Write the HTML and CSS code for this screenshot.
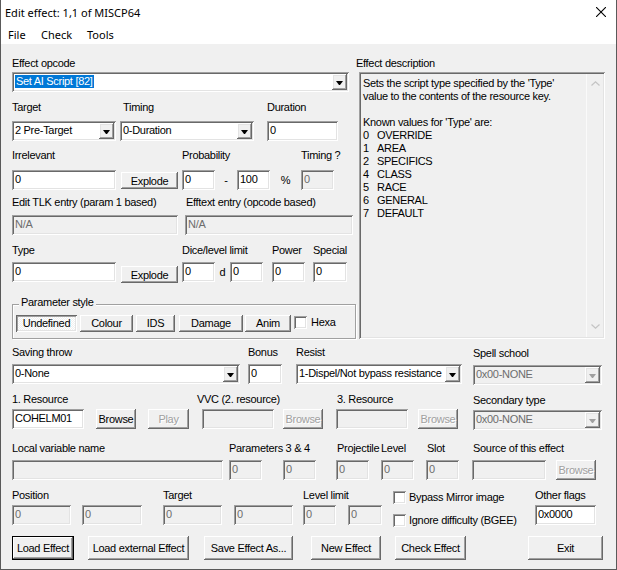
FILE: index.html
```html
<!DOCTYPE html>
<html lang="en">
<head>
    <meta charset="UTF-8">
    <title>Edit effect: 1,1 of MISCP64</title>
    <link rel="stylesheet" href="styles.css">
</head>
<body>
<div class="win">
    <div class="titlebar">
        <span class="title">Edit effect: 1,1 of MISCP64</span>
        <svg class="close" width="10" height="10" viewBox="0 0 10 10"><path d="M0 0L10 10M10 0L0 10" stroke="#000" stroke-width="1.1"/></svg>
    </div>
    <div class="menubar">
        <span class="m-file">File</span><span class="m-check">Check</span><span>Tools</span>
    </div>

    <div class="client">
        <div class="top">
            <div class="lcol">
                <!-- opcode -->
                <div class="row r1">
                    <div class="fld">
                        <div class="lbl">Effect opcode</div>
                        <div class="combo w337"><span class="val"><span class="sel">Set AI Script [82]</span></span><span class="arr"></span></div>
                    </div>
                </div>

                <div class="row r2">
                    <div class="fld">
                        <div class="lbl">Target</div>
                        <div class="combo w104"><span class="val">2 Pre-Target</span><span class="arr"></span></div>
                    </div>
                    <div class="fld ml4">
                        <div class="lbl pl3">Timing</div>
                        <div class="combo w134"><span class="val">0-Duration</span><span class="arr"></span></div>
                    </div>
                    <div class="fld ml13">
                        <div class="lbl">Duration</div>
                        <div class="edit w71">0</div>
                    </div>
                </div>

                <div class="row r3">
                    <div class="fld">
                        <div class="lbl">Irrelevant</div>
                        <div class="edit w104">0</div>
                    </div>
                    <div class="fld ml5">
                        <div class="lbl"></div>
                        <div class="btn small w57">Explode</div>
                    </div>
                    <div class="fld ml4">
                        <div class="lbl">Probability</div>
                        <div class="edit w33">0</div>
                    </div>
                    <div class="fld">
                        <div class="lbl"></div>
                        <div class="txt w22">-</div>
                    </div>
                    <div class="fld">
                        <div class="lbl"></div>
                        <div class="edit w33">100</div>
                    </div>
                    <div class="fld">
                        <div class="lbl"></div>
                        <div class="txt w31">%</div>
                    </div>
                    <div class="fld">
                        <div class="lbl">Timing ?</div>
                        <div class="edit dis w33">0</div>
                    </div>
                </div>

                <div class="row r4">
                    <div class="fld">
                        <div class="lbl">Edit TLK entry (param 1 based)</div>
                        <div class="edit dis w166">N/A</div>
                    </div>
                    <div class="fld ml7">
                        <div class="lbl pl1">Efftext entry (opcode based)</div>
                        <div class="edit dis w168">N/A</div>
                    </div>
                </div>

                <div class="row r5">
                    <div class="fld">
                        <div class="lbl">Type</div>
                        <div class="edit w104">0</div>
                    </div>
                    <div class="fld ml5">
                        <div class="lbl"></div>
                        <div class="btn small low w57">Explode</div>
                    </div>
                    <div class="fld ml4">
                        <div class="lbl">Dice/level limit</div>
                        <div class="edit w33">0</div>
                    </div>
                    <div class="fld">
                        <div class="lbl"></div>
                        <div class="txt w15">d</div>
                    </div>
                    <div class="fld">
                        <div class="lbl"></div>
                        <div class="edit w33">0</div>
                    </div>
                    <div class="fld ml9">
                        <div class="lbl">Power</div>
                        <div class="edit w33">0</div>
                    </div>
                    <div class="fld ml8">
                        <div class="lbl">Special</div>
                        <div class="edit w34">0</div>
                    </div>
                </div>

                <div class="grp">
                    <div class="grp-title">Parameter style</div>
                    <div class="grp-row">
                        <div class="btn tool pressed w61">Undefined</div>
                        <div class="btn tool ml3 w53">Colour</div>
                        <div class="btn tool ml3 w39">IDS</div>
                        <div class="btn tool ml4 w64">Damage</div>
                        <div class="btn tool ml2 w46">Anim</div>
                        <div class="chk ml3"></div>
                        <span class="chk-text">Hexa</span>
                    </div>
                </div>
            </div>

            <div class="rcol">
                <div class="lbl">Effect description</div>
                <div class="desc">
                    <div class="desc-text">
                        <div>Sets the script type specified by the 'Type'</div>
                        <div>value to the contents of the resource key.</div>
                        <div>&nbsp;</div>
                        <div>Known values for 'Type' are:</div>
                        <div><span class="num">0</span>OVERRIDE</div>
                        <div><span class="num">1</span>AREA</div>
                        <div><span class="num">2</span>SPECIFICS</div>
                        <div><span class="num">4</span>CLASS</div>
                        <div><span class="num">5</span>RACE</div>
                        <div><span class="num">6</span>GENERAL</div>
                        <div><span class="num">7</span>DEFAULT</div>
                    </div>
                    <div class="sb">
                        <svg width="9" height="5" viewBox="0 0 9 5"><path d="M0.5 4.5L4.5 0.8L8.5 4.5" fill="none" stroke="#c4c4c4" stroke-width="1.2"/></svg>
                        <svg width="9" height="5" viewBox="0 0 9 5"><path d="M0.5 0.5L4.5 4.2L8.5 0.5" fill="none" stroke="#c4c4c4" stroke-width="1.2"/></svg>
                    </div>
                </div>
            </div>
        </div>

        <div class="row r6">
            <div class="fld">
                <div class="lbl">Saving throw</div>
                <div class="combo w228"><span class="val">0-None</span><span class="arr"></span></div>
            </div>
            <div class="fld ml8">
                <div class="lbl">Bonus</div>
                <div class="edit w34">0</div>
            </div>
            <div class="fld ml14">
                <div class="lbl">Resist</div>
                <div class="combo w166"><span class="val">1-Dispel/Not bypass resistance</span><span class="arr"></span></div>
            </div>
            <div class="fld ml11 dn1">
                <div class="lbl">Spell school</div>
                <div class="combo dis w129"><span class="val">0x00-NONE</span><span class="arr"></span></div>
            </div>
        </div>

        <div class="row r7">
            <div class="fld">
                <div class="lbl">1. Resource</div>
                <div class="edit w72">COHELM01</div>
            </div>
            <div class="fld ml12">
                <div class="lbl"></div>
                <div class="btn w40">Browse</div>
            </div>
            <div class="fld ml12">
                <div class="lbl"></div>
                <div class="btn dis w41">Play</div>
            </div>
            <div class="fld ml13">
                <div class="lbl nl5">VVC (2. resource)</div>
                <div class="edit dis w72"></div>
            </div>
            <div class="fld ml9">
                <div class="lbl"></div>
                <div class="btn dis w40">Browse</div>
            </div>
            <div class="fld ml13">
                <div class="lbl pl1">3. Resource</div>
                <div class="edit dis w72"></div>
            </div>
            <div class="fld ml10">
                <div class="lbl"></div>
                <div class="btn dis w40">Browse</div>
            </div>
            <div class="fld ml15 dn1">
                <div class="lbl">Secondary type</div>
                <div class="combo dis w129"><span class="val">0x00-NONE</span><span class="arr"></span></div>
            </div>
        </div>

        <div class="row r8">
            <div class="fld">
                <div class="lbl">Local variable name</div>
                <div class="edit dis w211"></div>
            </div>
            <div class="fld ml6">
                <div class="lbl">Parameters 3 &amp; 4</div>
                <div class="edit dis w33">0</div>
            </div>
            <div class="fld ml21">
                <div class="lbl"></div>
                <div class="edit dis w33">0</div>
            </div>
            <div class="fld ml20">
                <div class="lbl pl1">Projectile</div>
                <div class="edit dis w33">0</div>
            </div>
            <div class="fld ml12">
                <div class="lbl">Level</div>
                <div class="edit dis w33">0</div>
            </div>
            <div class="fld ml12">
                <div class="lbl pl1">Slot</div>
                <div class="edit dis w33">0</div>
            </div>
            <div class="fld ml13">
                <div class="lbl pl1">Source of this effect</div>
                <div class="edit dis w74"></div>
            </div>
            <div class="fld ml10">
                <div class="lbl"></div>
                <div class="btn dis w40">Browse</div>
            </div>
        </div>

        <div class="row r9">
            <div class="fld">
                <div class="lbl">Position</div>
                <div class="edit dis w59">0</div>
            </div>
            <div class="fld ml11">
                <div class="lbl"></div>
                <div class="edit dis w60">0</div>
            </div>
            <div class="fld ml21">
                <div class="lbl">Target</div>
                <div class="edit dis w59">0</div>
            </div>
            <div class="fld ml12">
                <div class="lbl"></div>
                <div class="edit dis w59">0</div>
            </div>
            <div class="fld ml10">
                <div class="lbl">Level limit</div>
                <div class="edit dis w33">0</div>
            </div>
            <div class="fld ml12">
                <div class="lbl"></div>
                <div class="edit dis w34">0</div>
            </div>
            <div class="checks ml11 w142">
                <div class="chk-line"><div class="chk"></div><span class="chk-text">Bypass Mirror image</span></div>
                <div class="chk-line"><div class="chk"></div><span class="chk-text">Ignore difficulty (BGEE)</span></div>
            </div>
            <div class="fld">
                <div class="lbl">Other flags</div>
                <div class="edit w61">0x0000</div>
            </div>
        </div>

        <div class="actions">
            <div class="btn big def w62">Load Effect</div>
            <div class="btn big ml14 w101">Load external Effect</div>
            <div class="btn big ml15 w89">Save Effect As...</div>
            <div class="btn big ml18 w70">New Effect</div>
            <div class="btn big ml14 w71">Check Effect</div>
            <div class="btn big ml62 w75">Exit</div>
        </div>
    </div>
</div>
</body>
</html>
```

FILE: styles.css
```css
* {
    margin: 0;
    padding: 0;
    box-sizing: border-box;
}

body {
    font: 11px/13px "Liberation Sans", Arial, sans-serif;
    letter-spacing: -0.3px;
    color: #000;
    background: #fff;
}

/* Window frame */
.win {
    width: 617px;
    height: 570px;
    border: 1px solid #5a5a5a;
    border-top: none;
    background: #f0f0f0;
    display: flex;
    flex-direction: column;
}

.titlebar {
    height: 25px;
    background: #fff;
    display: flex;
    align-items: center;
    justify-content: space-between;
    padding: 0 10px 0 4px;
    font: 11px "Noto Sans", sans-serif;
    letter-spacing: 0;
}

.close {
    margin-bottom: 1px;
}

.menubar {
    height: 19px;
    background: #fff;
    display: flex;
    align-items: center;
    padding-left: 7px;
    font: 11px "Noto Sans", sans-serif;
    letter-spacing: 0;
}

.m-file { width: 33px; }
.m-check { width: 46px; }

.client {
    flex: 1;
    padding-left: 11px;
}

.top {
    display: flex;
}

.lcol {
    width: 344px;
}

.rcol {
    padding-top: 13px;
}

/* Rows of fields */
.row {
    display: flex;
    align-items: flex-start;
}

.fld {
    display: flex;
    flex-direction: column;
}

.lbl {
    height: 13px;
    width: 0;
    white-space: nowrap;
}

.r1 { margin-top: 13px; }
.r1 .lbl { margin-bottom: 2px; }
.r2 { margin-top: 9px; }
.r2 .lbl { margin-bottom: 7px; }
.r3 { margin-top: 8px; }
.r3 .lbl { margin-bottom: 8px; }
.r4 { margin-top: 6px; }
.r4 .lbl { margin-bottom: 6px; }
.r5 { margin-top: 9px; }
.r5 .lbl { margin-bottom: 5px; }
.r6 { margin-top: 7px; }
.r6 .lbl { margin-bottom: 5px; }
.r7 { margin-top: 8px; }
.r7 .lbl { margin-bottom: 3px; }
.r8 { margin-top: 12px; }
.r8 .lbl { margin-bottom: 5px; }
.r9 { margin-top: 9px; }
.r9 .lbl { margin-bottom: 3px; }

.dn1 { margin-top: 1px; }

.pl1 { padding-left: 1px; }
.pl3 { padding-left: 3px; }
.nl5 { margin-left: -5px; }

.ml2 { margin-left: 2px; }
.ml3 { margin-left: 3px; }
.ml4 { margin-left: 4px; }
.ml5 { margin-left: 5px; }
.ml6 { margin-left: 6px; }
.ml7 { margin-left: 7px; }
.ml8 { margin-left: 8px; }
.ml9 { margin-left: 9px; }
.ml10 { margin-left: 10px; }
.ml11 { margin-left: 11px; }
.ml12 { margin-left: 12px; }
.ml13 { margin-left: 13px; }
.ml14 { margin-left: 14px; }
.ml15 { margin-left: 15px; }
.ml18 { margin-left: 18px; }
.ml20 { margin-left: 20px; }
.ml21 { margin-left: 21px; }
.ml62 { margin-left: 62px; }

.w15 { width: 15px; }
.w22 { width: 22px; }
.w31 { width: 31px; }
.w33 { width: 33px; }
.w34 { width: 34px; }
.w39 { width: 39px; }
.w40 { width: 40px; }
.w41 { width: 41px; }
.w46 { width: 46px; }
.w53 { width: 53px; }
.w57 { width: 57px; }
.w59 { width: 59px; }
.w60 { width: 60px; }
.w61 { width: 61px; }
.w62 { width: 62px; }
.w64 { width: 64px; }
.w70 { width: 70px; }
.w71 { width: 71px; }
.w72 { width: 72px; }
.w74 { width: 74px; }
.w75 { width: 75px; }
.w89 { width: 89px; }
.w101 { width: 101px; }
.w104 { width: 104px; }
.w129 { width: 129px; }
.w134 { width: 134px; }
.w142 { width: 142px; }
.w166 { width: 166px; }
.w168 { width: 168px; }
.w211 { width: 211px; }
.w228 { width: 228px; }
.w337 { width: 337px; }

/* Sunken edit box */
.edit {
    height: 20px;
    background: #fff;
    padding: 2px 3px 0;
    line-height: 15px;
    white-space: nowrap;
    overflow: hidden;
    box-shadow: inset 1px 1px #a0a0a0, inset -1px -1px #fff,
                inset 2px 2px #696969, inset -2px -2px #e3e3e3;
}

.edit.dis {
    background: #f0f0f0;
    color: #6d6d6d;
}

.txt {
    height: 20px;
    line-height: 20px;
    text-align: center;
}

/* Drop-down list */
.combo {
    height: 20px;
    display: flex;
    padding: 2px;
    background: #fff;
    box-shadow: inset 1px 1px #a0a0a0, inset -1px -1px #fff,
                inset 2px 2px #696969, inset -2px -2px #e3e3e3;
}

.combo .val {
    flex: 1;
    padding: 1px 0 0 1px;
    white-space: nowrap;
    overflow: hidden;
}

.combo .sel {
    display: inline-block;
    padding: 0 1px;
    background: #0078d7;
    color: #fff;
}

.combo .arr {
    width: 15px;
    height: 16px;
    display: flex;
    align-items: center;
    justify-content: center;
    background: #f0f0f0;
    box-shadow: inset -1px -1px #696969, inset 1px 1px #fff,
                inset -2px -2px #a0a0a0, inset 2px 2px #e3e3e3;
}

.combo .arr::after {
    content: '';
    width: 1px;
    height: 0;
    border-top: 4px solid #000;
    border-left: 3px solid transparent;
    border-right: 3px solid transparent;
    margin-top: 1px;
}

.combo.dis {
    background: #f0f0f0;
    color: #6d6d6d;
}

.combo.dis .arr::after {
    border-top-color: #a0a0a0;
}

/* Push buttons */
.btn {
    height: 20px;
    display: flex;
    align-items: center;
    justify-content: center;
    white-space: nowrap;
    background: #f0f0f0;
    box-shadow: inset -1px -1px #696969, inset 1px 1px #fff,
                inset -2px -2px #a0a0a0, inset 2px 2px #f0f0f0;
}

.btn.small {
    height: 17px;
    margin-top: 2px;
    padding-top: 1px;
}

.btn.small.low {
    margin-top: 4px;
}

.btn.tool {
    height: 17px;
}

.btn.pressed {
    background: repeating-conic-gradient(#fff 0 25%, #f0f0f0 0 50%) 0 0 / 2px 2px;
    box-shadow: inset 1px 1px #696969, inset -1px -1px #fff,
                inset 2px 2px #a0a0a0, inset -2px -2px #e3e3e3;
}

.btn.dis {
    color: #a0a0a0;
    text-shadow: 1px 1px #fff;
}

.btn.big {
    height: 24px;
}

.btn.def {
    border: 1px solid #000;
}

/* Group box */
.grp {
    margin-top: 21px;
    height: 35px;
    border: 1px solid #a0a0a0;
    box-shadow: 1px 1px #fff, inset 1px 1px #fff;
}

.grp-title {
    width: fit-content;
    margin: -9px 0 0 6px;
    padding: 0 2px;
    background: #f0f0f0;
    height: 13px;
}

.grp-row {
    display: flex;
    align-items: flex-start;
    margin: 6px 0 0 3px;
}

.chk {
    width: 13px;
    height: 13px;
    background: #fff;
    box-shadow: inset 1px 1px #a0a0a0, inset -1px -1px #fff,
                inset 2px 2px #696969, inset -2px -2px #e3e3e3;
}

.grp-row .chk {
    margin-top: 1px;
}

.chk-text {
    margin-left: 4px;
    line-height: 15px;
}

.checks {
    margin-top: 2px;
    display: flex;
    flex-direction: column;
    gap: 10px;
}

.chk-line {
    display: flex;
    align-items: center;
    height: 13px;
}

.chk-line .chk-text {
    margin-left: 3px;
}

/* Description panel */
.desc {
    width: 246px;
    height: 267px;
    margin: 2px 0 0 3px;
    padding: 2px;
    display: flex;
    background: #f0f0f0;
    box-shadow: inset 1px 1px #a0a0a0, inset -1px -1px #fff,
                inset 2px 2px #696969, inset -2px -2px #e3e3e3;
}

.desc-text {
    flex: 1;
    padding: 3px 0 0 2px;
    white-space: nowrap;
}

.num {
    display: inline-block;
    width: 14px;
}

.sb {
    width: 17px;
    border-left: 1px solid #fafafa;
    display: flex;
    flex-direction: column;
    justify-content: space-between;
    align-items: center;
    padding: 7px 0 8px;
}

/* Bottom buttons */
.actions {
    display: flex;
    margin-top: 9px;
}
```
